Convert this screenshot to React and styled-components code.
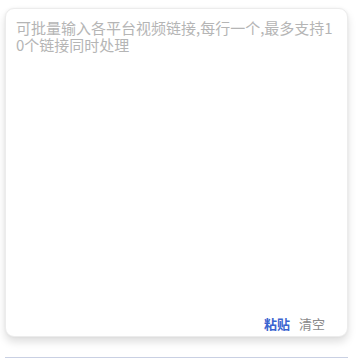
import React from "react"
import styled, { createGlobalStyle } from "styled-components"

const GlobalStyle = createGlobalStyle`
    html, body {
        margin: 0;
        padding: 0;
        background: #ffffff;
        font-family: "Noto Sans CJK SC", "Noto Sans", sans-serif;
    }
`

const Page = styled.div`
    width: 360px;
    height: 360px;
    padding: 8px 12px 0 5px;
    box-sizing: border-box;
    display: flex;
    flex-direction: column;
`

const Card = styled.div`
    height: 329px;
    box-sizing: border-box;
    background: #fff;
    border: 1px solid #ececec;
    border-radius: 9px;
    box-shadow: 0 5px 8px rgba(0, 0, 0, 0.13), 0 0 3px rgba(0, 0, 0, 0.05);
    display: flex;
    flex-direction: column;
    padding: 10px 22px 3px 10px;
`

const Field = styled.div`
    flex: 1;
    font-size: 15px;
    line-height: 17px;
    color: #b5b5b5;
    word-break: break-all;
    margin-right: -10px;
`

const Actions = styled.div`
    display: flex;
    justify-content: flex-end;
    gap: 9px;
`

const ActionBtn = styled.button`
    border: none;
    background: none;
    padding: 0;
    font-family: inherit;
    font-size: 13px;
    line-height: 18px;
    color: ${p => (p.$primary ? "#3a64d0" : "#8a8a8a")};
    font-weight: ${p => (p.$primary ? 600 : 400)};
    cursor: pointer;
`

const Divider = styled.div`
    margin-top: 20px;
    height: 1px;
    background: #c9d0e3;
`

const App = () => {
    return (
        <>
            <GlobalStyle />
            <Page>
                <Card>
                    <Field>可批量输入各平台视频链接,每行一个,最多支持10个链接同时处理</Field>
                    <Actions>
                        <ActionBtn $primary>粘贴</ActionBtn>
                        <ActionBtn>清空</ActionBtn>
                    </Actions>
                </Card>
                <Divider />
            </Page>
        </>
    )
}

export default App
